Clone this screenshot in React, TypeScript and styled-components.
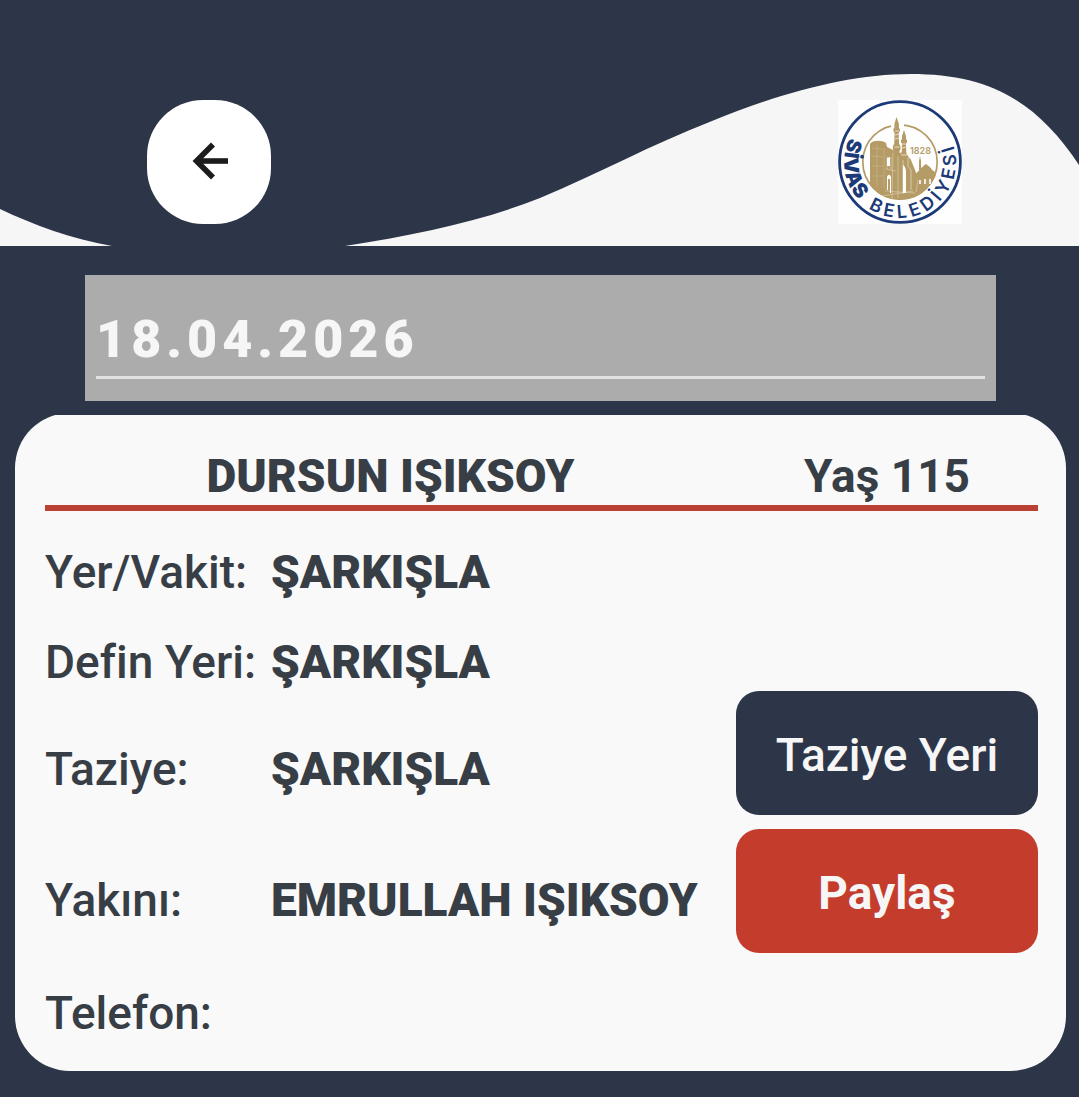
import React from 'react';
import styled, { createGlobalStyle } from 'styled-components';

const colors = {
  navy: '#2d3548',
  light: '#f6f6f6',
  card: '#f9f9f9',
  text: '#373e46',
  red: '#c43c2c',
  line: '#b94235',
  gold: '#b59b66',
  logoBlue: '#1c3a78',
};

const GlobalStyle = createGlobalStyle`
  * {
    box-sizing: border-box;
  }

  body {
    margin: 0;
    background: ${colors.navy};
    color: ${colors.text};
    font-family: Roboto, 'Noto Sans', sans-serif;
    font-size: 46px;
    font-variant-ligatures: none;
    line-height: 54px;
  }
`;

const Header = styled.header`
  position: relative;
  display: flex;
  justify-content: space-between;
  padding: 100px 117px 22px 147px;
`;

const Wave = styled.svg`
  position: absolute;
  inset: 0;
  width: 100%;
  height: 100%;
`;

const BackButton = styled.button`
  position: relative;
  display: flex;
  align-items: center;
  justify-content: center;
  width: 124px;
  height: 124px;
  padding: 0 0 2px;
  border: 0;
  border-radius: 56px;
  background: #fff;
  cursor: pointer;
`;

const LogoBox = styled.div`
  position: relative;
  width: 124px;
  height: 124px;
  background: #fefefe;
`;

const DateField = styled.div`
  margin: 29px 83px 14px 85px;
  padding: 31px 11px 22px;
  background: #acacac;
`;

const DateInput = styled.input`
  display: block;
  width: 100%;
  height: 73px;
  padding: 0 0 4px;
  border: 0;
  border-bottom: 3px solid #e2e2e2;
  outline: 0;
  background: transparent;
  color: ${colors.light};
  font-family: inherit;
  font-size: 52px;
  font-weight: 900;
  letter-spacing: 5px;
`;

const List = styled.main`
  padding: 0 13px 26px 15px;
  overflow: hidden;
`;

const Card = styled.article`
  margin-top: -2px;
  padding: 36px 28px 14px 30px;
  border-radius: 55px;
  background: ${colors.card};
`;

const CardHeader = styled.div`
  display: grid;
  grid-template-columns: 1fr 302px;
  padding-bottom: 2px;
  border-bottom: 6px solid ${colors.line};
  text-align: center;
`;

const Name = styled.h1`
  margin: 0;
  font-size: 46px;
  font-weight: 900;
`;

const Age = styled.span`
  font-weight: 700;
`;

const CardBody = styled.div`
  display: grid;
  grid-template-columns: 1fr 302px;
  padding-top: 16px;
`;

const Details = styled.dl`
  margin: 0;
`;

const DetailRow = styled.div<{ $height: number }>`
  display: grid;
  grid-template-columns: 226px 1fr;
  align-items: center;
  height: ${({ $height }) => $height}px;
  white-space: nowrap;
`;

const Label = styled.dt`
  font-weight: 500;
`;

const Value = styled.dd`
  margin: 0;
  font-weight: 900;
`;

const Actions = styled.div`
  display: flex;
  flex-direction: column;
  gap: 14px;
  padding-top: 164px;
`;

const ActionButton = styled.button<{ $color: string; $weight: number }>`
  height: 124px;
  padding: 4px 0 0;
  border: 0;
  border-radius: 23px;
  background: ${({ $color }) => $color};
  color: ${colors.light};
  font-family: inherit;
  font-size: 46px;
  font-weight: ${({ $weight }) => $weight};
  line-height: 54px;
  cursor: pointer;
`;

const LogoText = styled.text<{ $bold?: boolean }>`
  fill: ${colors.logoBlue};
  font-family: Inter, sans-serif;
  font-size: ${({ $bold }) => ($bold ? 20 : 18)}px;
  font-weight: ${({ $bold }) => ($bold ? 900 : 600)};
  letter-spacing: ${({ $bold }) => ($bold ? 1 : 4)}px;
`;

const YearText = styled.text`
  fill: ${colors.gold};
  font-family: Inter, sans-serif;
  font-size: 9px;
  font-weight: 600;
`;

const details = [
  { label: 'Yer/Vakit:', value: 'ŞARKIŞLA', height: 90 },
  { label: 'Defin Yeri:', value: 'ŞARKIŞLA', height: 90 },
  { label: 'Taziye:', value: 'ŞARKIŞLA', height: 124 },
  { label: 'Yakını:', value: 'EMRULLAH IŞIKSOY', height: 138 },
  { label: 'Telefon:', value: '', height: 88 },
];

const BackIcon = () => (
  <svg width="40" height="40" viewBox="0 0 40 40" fill="none" stroke="#1c1c1c" strokeWidth="5.6" aria-hidden="true">
    <path d="M24 3.5 7.5 20 24 36.5" />
    <path d="M8 20h31" />
  </svg>
);

const Logo = () => (
  <svg width="124" height="124" viewBox="0 0 124 124" role="img" aria-label="Sivas Belediyesi">
    <defs>
      <path id="ring-left" d="M11.5 38A55.8 55.8 0 0 0 62 117.8" />
      <path id="ring-bottom" d="M30.5 108A55.8 55.8 0 0 0 112.5 38A55.8 55.8 0 0 0 100 21" />
      <clipPath id="disc">
        <circle cx="62" cy="62" r="38" />
      </clipPath>
    </defs>
    <circle cx="62" cy="62" r="60.4" fill="#fefefe" stroke={colors.logoBlue} strokeWidth="2.8" />
    <circle cx="62" cy="62" r="37.2" fill="none" stroke={colors.gold} strokeWidth="1.7" />
    <path d="M53 22h13v6H53z" fill="#fefefe" />
    <g clipPath="url(#disc)" fill={colors.gold}>
      {/* medrese walls and ground */}
      <path d="M32 44c2-4 12-4 16-1l1 4 8 4 4 2 6-1 6 8 6 15 4 5 7 3 14 2v30H32z" />
      {/* small mosque */}
      <path d="M77 84v-8c1-3 3-5 5-6 1-3 4-4 6-6 2 2 5 3 6 6 3 1 4 4 4 7v8z" />
      <path d="M81 72V61l1-5 1 5v11z" />
    </g>
    {/* minarets */}
    <g fill={colors.gold}>
      <path d="m58.5 17 2.4 7v4l1 1v2l-1.2 2 .4 11 1.4 2v3l-1 2v7h-5.6v-7l-1-2v-3l1.3-2 .4-11-1.2-2v-2l1-1v-4z" />
      <path d="m66 30 2 6v3l1 1v2l-1 2 .4 10 1.3 2v4h-7.4v-4l1.3-2 .4-10-1-2v-2l1-1v-3z" />
    </g>
    {/* light joints, doors and windows */}
    <g fill="none" stroke="#f3ecdc" strokeWidth="0.8">
      <path d="M57 31h4M57 35l4-1M57 39l4-1M56.5 47h5M64 44h4M64 48l4-1M63 55h6" />
      <path d="M46 48v40M34 48l11 1M34 56l11 1M34 66h11M35 76h10M39 45v42" opacity="0.25" />
      <path d="M49 56v13M53 57v13M48 69l10 2M55 53l-1 46M60 56v42M47 91l30 2M43 96l32-5M80 80l-2 12" opacity="0.5" />
      <path d="M70 57v9l3 4v20M65 60v34" opacity="0.7" />
    </g>
    <g fill="#fefefe">
      <path d="M49 77c1-3 3-3 4 0v16h-1V79h-2v11h-1zM65 65c2 1 3 4 3 7v21h-3zM49 58l3-1v9h-3z" />
      <path d="M81 80h2v4h-2zM86 79h2v5h-2zM91 79h2v5h-2z" opacity="0.8" />
    </g>
    <YearText x="72" y="54">1828</YearText>
    <LogoText $bold>
      <textPath href="#ring-left">SİVAS</textPath>
    </LogoText>
    <LogoText>
      <textPath href="#ring-bottom">BELEDİYESİ</textPath>
    </LogoText>
  </svg>
);

const App: React.FC = () => (
  <>
    <GlobalStyle />
    <Header>
      <Wave viewBox="0 0 1079 246" preserveAspectRatio="none" fill={colors.light} aria-hidden="true">
        <path d="M0 209C34 225 72 239 112 246H0z" />
        <path d="M345 246C420 234 482 221 540 198C600 173 650 145 712 121C780 93 850 74 911 74C985 74 1035 98 1079 165V246z" />
      </Wave>
      <BackButton type="button" aria-label="Geri">
        <BackIcon />
      </BackButton>
      <LogoBox>
        <Logo />
      </LogoBox>
    </Header>
    <DateField>
      <DateInput type="text" aria-label="Tarih" defaultValue="18.04.2026" />
    </DateField>
    <List>
      <Card>
        <CardHeader>
          <Name>DURSUN IŞIKSOY</Name>
          <Age>Yaş 115</Age>
        </CardHeader>
        <CardBody>
          <Details>
            {details.map(({ label, value, height }) => (
              <DetailRow key={label} $height={height}>
                <Label>{label}</Label>
                <Value>{value}</Value>
              </DetailRow>
            ))}
          </Details>
          <Actions>
            <ActionButton type="button" $color={colors.navy} $weight={500}>
              Taziye Yeri
            </ActionButton>
            <ActionButton type="button" $color={colors.red} $weight={700}>
              Paylaş
            </ActionButton>
          </Actions>
        </CardBody>
      </Card>
    </List>
  </>
);

export default App;
